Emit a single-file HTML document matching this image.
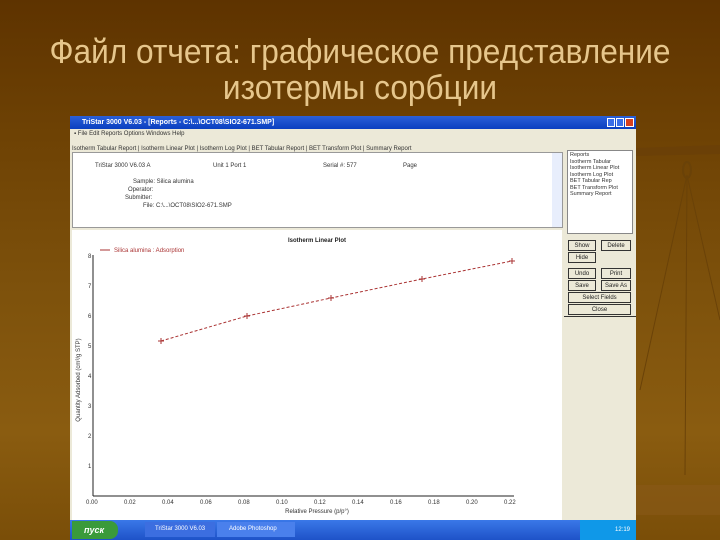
<!DOCTYPE html>
<html><head><meta charset="utf-8"><style>
*{margin:0;padding:0;box-sizing:border-box}
body{width:720px;height:540px;overflow:hidden;position:relative;font-family:"Liberation Sans",sans-serif;
background:linear-gradient(180deg,#5e3300 0%,#6e4204 25%,#7e520c 55%,#8a5c10 80%,#7a4e08 100%);}
.t{position:absolute;left:0;width:720px;text-align:center;color:#e6c68c;font-size:34px;line-height:38px;transform:scaleX(0.93)}
.a{position:absolute}
.sm{font-size:6px;color:#333;white-space:nowrap}
.btn{position:absolute;background:#ece9d8;border:1px solid #333;font-size:6px;text-align:center;line-height:10px;color:#222}
</style></head><body>
<div class="t" style="top:33px">Файл отчета: графическое представление</div>
<div class="t" style="top:69px">изотермы сорбции</div>
<svg class="a" style="left:630px;top:140px" width="90" height="400">
<polygon points="5,8 90,5 90,14 5,16" fill="#6a3e08" opacity=".7"/>
<line x1="57" y1="35" x2="10" y2="250" stroke="#6a4208" stroke-width="1"/>
<line x1="57" y1="35" x2="55" y2="335" stroke="#6a4208" stroke-width="1"/>
<line x1="57" y1="35" x2="90" y2="180" stroke="#6a4208" stroke-width="1"/>
<ellipse cx="57" cy="30" rx="4" ry="8" fill="none" stroke="#6a4208" stroke-width="2"/>
<rect x="0" y="345" width="90" height="30" fill="#8a5a1a" opacity=".5"/>
</svg>
<div class="a" style="left:70px;top:116px;width:566px;height:424px;background:#ece9d8">
 <div class="a" style="left:0;top:0;width:566px;height:13px;background:linear-gradient(180deg,#2a5fd8,#0a3fc0);color:#fff;font-size:7px;line-height:13px;padding-left:12px;font-weight:bold">TriStar 3000 V6.03 - [Reports - C:\...\OCT08\SIO2-671.SMP]</div>
 <div class="a" style="left:537px;top:2px;width:8px;height:9px;background:#3a6ee8;border:1px solid #fff"></div>
 <div class="a" style="left:546px;top:2px;width:8px;height:9px;background:#3a6ee8;border:1px solid #fff"></div>
 <div class="a" style="left:555px;top:2px;width:9px;height:9px;background:#d84020;border:1px solid #fff"></div>
 <div class="a sm" style="left:4px;top:15px">▪ File  Edit   Reports  Options  Windows  Help</div>
 <div class="a sm" style="left:2px;top:30px;border-bottom:1px solid #999;width:480px">Isotherm Tabular Report | Isotherm Linear Plot | Isotherm Log Plot | BET Tabular Report | BET Transform Plot | Summary Report</div>
 <div class="a" style="left:2px;top:36px;width:491px;height:76px;background:#fff;border:1px solid #999">
  <div class="a sm" style="left:22px;top:10px">TriStar 3000 V6.03 A</div>
  <div class="a sm" style="left:140px;top:10px">Unit 1 Port 1</div>
  <div class="a sm" style="left:250px;top:10px">Serial #: 577</div>
  <div class="a sm" style="left:330px;top:10px">Page</div>
  <div class="a sm" style="left:60px;top:26px">Sample: Silica alumina</div>
  <div class="a sm" style="left:55px;top:34px">Operator:</div>
  <div class="a sm" style="left:52px;top:42px">Submitter:</div>
  <div class="a sm" style="left:70px;top:50px">File: C:\...\OCT08\SIO2-671.SMP</div>
  <div class="a" style="right:0;top:0;width:10px;height:74px;background:#e8eefc"></div>
 </div>
 <div class="a" style="left:2px;top:114px;width:490px;height:290px;background:#fff"></div>
 <div class="a" style="left:497px;top:34px;width:66px;height:84px;background:#fff;border:1px solid #888;font-size:5.5px;line-height:6.5px;color:#333;padding:1px 2px">Reports<br>Isotherm Tabular<br>Isotherm Linear Plot<br>Isotherm Log Plot<br>BET Tabular Rep<br>BET Transform Plot<br>Summary Report</div>
 <div class="btn" style="left:498px;top:124px;width:28px;height:11px">Show</div>
 <div class="btn" style="left:531px;top:124px;width:30px;height:11px">Delete</div>
 <div class="btn" style="left:498px;top:136px;width:28px;height:11px">Hide</div>
 <div class="btn" style="left:498px;top:152px;width:28px;height:11px">Undo</div>
 <div class="btn" style="left:531px;top:152px;width:30px;height:11px">Print</div>
 <div class="btn" style="left:498px;top:164px;width:28px;height:11px">Save</div>
 <div class="btn" style="left:531px;top:164px;width:30px;height:11px">Save As</div>
 <div class="btn" style="left:498px;top:176px;width:63px;height:11px">Select Fields</div>
 <div class="btn" style="left:498px;top:188px;width:63px;height:11px">Close</div>
 <div class="a" style="left:494px;top:200px;width:72px;height:1px;background:#333"></div>
</div>
<svg class="a" style="left:72px;top:230px" width="490" height="290" font-family="Liberation Sans" font-size="6">
 <text x="245" y="12" text-anchor="middle" font-weight="bold" fill="#222">Isotherm Linear Plot</text>
 <line x1="28" y1="20" x2="38" y2="20" stroke="#a33"/><text x="42" y="22" fill="#a33">Silica alumina : Adsorption</text>
 <line x1="21" y1="25" x2="21" y2="266" stroke="#222"/>
 <line x1="21" y1="266" x2="442" y2="266" stroke="#222"/>
 <text x="8" y="150" transform="rotate(-90 8 150)" text-anchor="middle" fill="#333" font-size="6">Quantity Adsorbed (cm³/g STP)</text>
 <text x="245" y="283" text-anchor="middle" fill="#333">Relative Pressure (p/p°)</text>
 <polyline points="89,111 175,86 259,68 350,49 440,31" fill="none" stroke="#a33" stroke-dasharray="3,2"/>
 <g stroke="#a33"><path d="M86,111h6M89,108v6M172,86h6M175,83v6M256,68h6M259,65v6M347,49h6M350,46v6M437,31h6M440,28v6"/></g>
 <g fill="#333"><text x="16" y="28">8</text><text x="16" y="58">7</text><text x="16" y="88">6</text><text x="16" y="118">5</text><text x="16" y="148">4</text><text x="16" y="178">3</text><text x="16" y="208">2</text><text x="16" y="238">1</text>
 <text x="14" y="274">0.00</text><text x="52" y="274">0.02</text><text x="90" y="274">0.04</text><text x="128" y="274">0.06</text><text x="166" y="274">0.08</text><text x="204" y="274">0.10</text><text x="242" y="274">0.12</text><text x="280" y="274">0.14</text><text x="318" y="274">0.16</text><text x="356" y="274">0.18</text><text x="394" y="274">0.20</text><text x="432" y="274">0.22</text></g>
</svg>
<div class="a" style="left:70px;top:520px;width:566px;height:20px;background:linear-gradient(180deg,#3a78e8,#1e52c8)"></div>
<div class="a" style="left:72px;top:521px;width:46px;height:18px;background:#3a9a3a;border-radius:0 8px 8px 0;color:#fff;font-size:9px;font-style:italic;font-weight:bold;line-height:18px;padding-left:12px">пуск</div>
<div class="a" style="left:145px;top:522px;width:70px;height:15px;background:#3c6ee0;color:#fff;font-size:6px;line-height:15px;padding-left:10px">TriStar 3000 V6.03</div>
<div class="a" style="left:217px;top:522px;width:78px;height:15px;background:#4a80ec;color:#fff;font-size:6px;line-height:15px;padding-left:12px">Adobe Photoshop</div>
<div class="a" style="left:580px;top:520px;width:56px;height:20px;background:#0f98e8;color:#fff;font-size:6px;line-height:20px;text-align:right;padding-right:6px">12:19</div>
</body></html>
